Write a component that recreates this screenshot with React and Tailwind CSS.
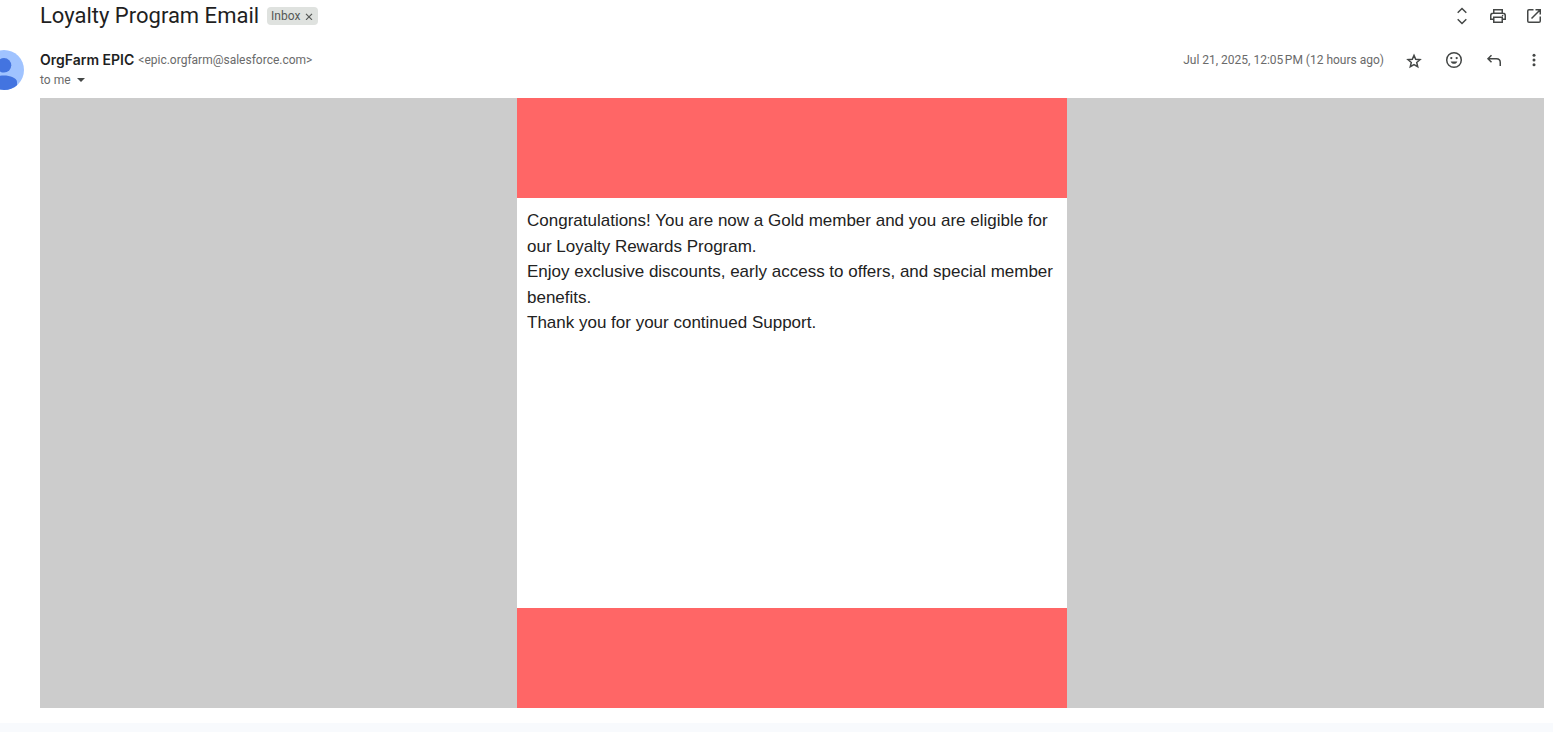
function Icon({ children }) {
  return (
    <svg viewBox="0 0 20 20" className="size-5" fill="none" stroke="currentColor" strokeWidth="1.5" aria-hidden="true">
      {children}
    </svg>
  );
}

function IconButton({ label, children }) {
  return (
    <button type="button" aria-label={label} className="flex size-5 items-center justify-center text-[#444746]">
      <Icon>{children}</Icon>
    </button>
  );
}

function Header() {
  return (
    <header className="flex h-8 items-center justify-between pl-10">
      <div className="flex items-center gap-2">
        <h1 className="text-[22px] leading-7 text-[#1f1f1f]">Loyalty Program Email</h1>
        <div className="flex h-[18px] items-center gap-1 rounded bg-[#dfe2df] px-1 text-xs text-[#555856]">
          <span>Inbox</span>
          <button type="button" aria-label="Remove label Inbox" className="flex size-2.5 items-center justify-center">
            <svg viewBox="0 0 8 8" className="size-2" stroke="currentColor" strokeWidth="1.2" aria-hidden="true">
              <path d="M1 1.8l6 6M7 1.8l-6 6" />
            </svg>
          </button>
        </div>
      </div>
      <div className="flex items-center gap-4">
        <IconButton label="Expand all">
          <path d="M5.7 6.8L10 2.5l4.3 4.3M5.7 13.2l4.3 4.3 4.3-4.3" />
        </IconButton>
        <IconButton label="Print all">
          <path d="M5.75 7V3.75h8.5V7M5.5 13.25H2.75V9.5q0-2.25 2.25-2.25h10q2.25 0 2.25 2.25v3.75H14.5M5.75 11.25h8.5v5h-8.5z" />
          <circle cx="14.6" cy="9.6" r=".8" fill="currentColor" stroke="none" />
        </IconButton>
        <IconButton label="Open in new window">
          <path d="M9.5 3.75H5q-1.25 0-1.25 1.25v10q0 1.25 1.25 1.25h10q1.25 0 1.25-1.25v-4.5M11.5 3.75h4.75V8.5M16 4l-8.5 8.5" />
        </IconButton>
      </div>
    </header>
  );
}

function Avatar() {
  return (
    <svg viewBox="0 0 40 40" className="-ml-4 size-10 shrink-0" role="img" aria-label="OrgFarm EPIC">
      <defs>
        <clipPath id="avatar-clip">
          <circle cx="20" cy="20" r="20" />
        </clipPath>
      </defs>
      <g clipPath="url(#avatar-clip)">
        <rect width="40" height="40" fill="#a0c3ff" />
        <circle cx="20" cy="15.3" r="7.3" fill="#4374e0" />
        <path d="M7 40v-8c0-4 7-6.5 13-6.5S33 28 33 32v8z" fill="#4374e0" />
      </g>
    </svg>
  );
}

function Sender() {
  return (
    <div className="flex items-start gap-4 pt-[18px] pb-2">
      <Avatar />
      <div className="flex grow items-start justify-between">
        <div>
          <p className="flex h-5 items-center gap-1 leading-5">
            <span className="font-[Inter,sans-serif] text-sm font-semibold text-[#1f1f1f]">OrgFarm EPIC</span>
            <span className="text-xs text-[#6a6a6a]">&lt;epic.orgfarm@salesforce.com&gt;</span>
          </p>
          <button type="button" className="flex h-5 items-center gap-1.5 text-xs text-[#6a6a6a]">
            to me
            <svg viewBox="0 0 8 4" className="h-1 w-2" fill="#444746" aria-hidden="true">
              <path d="M0 0h8L4 4z" />
            </svg>
          </button>
        </div>
        <div className="flex h-5 items-center gap-5">
          <time dateTime="2025-07-21T12:05" className="text-xs text-[#6a6a6a]">
            Jul 21, 2025, 12:05{"\u202f"}PM (12 hours ago)
          </time>
          <IconButton label="Star">
            <path d="M10 5.4l1.7 3.9 4.3.4-3.3 2.8 1 4.2-3.7-2.200-3.700 2.200 1-4.200L4 9.700l4.300-.4z" />
          </IconButton>
          <IconButton label="Add reaction">
            <circle cx="10" cy="10" r="7.3" />
            <circle cx="7.3" cy="8.1" r="1.15" fill="currentColor" stroke="none" />
            <circle cx="12.7" cy="8.1" r="1.15" fill="currentColor" stroke="none" />
            <path d="M6.7 11.5h6.6c-.5 1.5-1.7 2.3-3.3 2.3s-2.8-.8-3.3-2.3z" fill="currentColor" stroke="none" />
          </IconButton>
          <IconButton label="Reply">
            <path d="M7.5 5.3L4 8.750l3.500 3.500M4 8.750h8.500q3.750 0 3.750 3.750V16" />
          </IconButton>
          <IconButton label="More options">
            <g fill="currentColor" stroke="none">
              <circle cx="10" cy="5.2" r="1.5" />
              <circle cx="10" cy="10" r="1.5" />
              <circle cx="10" cy="14.8" r="1.5" />
            </g>
          </IconButton>
        </div>
      </div>
    </div>
  );
}

function Message() {
  return (
    <article className="ml-10 flex justify-center bg-[#cccccc]">
      <div className="w-[550px] bg-white">
        <div className="h-[100px] bg-[#ff6666]" />
        <div className="min-h-[410px] p-2.5 font-['Liberation_Sans',Arial,sans-serif] text-[17px] leading-normal text-[#222222]">
          <p>Congratulations! You are now a Gold member and you are eligible for our Loyalty Rewards Program.</p>
          <p>Enjoy exclusive discounts, early access to offers, and special member benefits.</p>
          <p>Thank you for your continued Support.</p>
        </div>
        <div className="h-[100px] bg-[#ff6666]" />
      </div>
    </article>
  );
}

export default function App() {
  return (
    <div className="flex min-h-screen flex-col overflow-hidden bg-[#f8fafd] font-[Roboto,'Open_Sans',sans-serif]">
      <main className="bg-white pr-[9px] pb-[15px]">
        <Header />
        <Sender />
        <Message />
      </main>
    </div>
  );
}
